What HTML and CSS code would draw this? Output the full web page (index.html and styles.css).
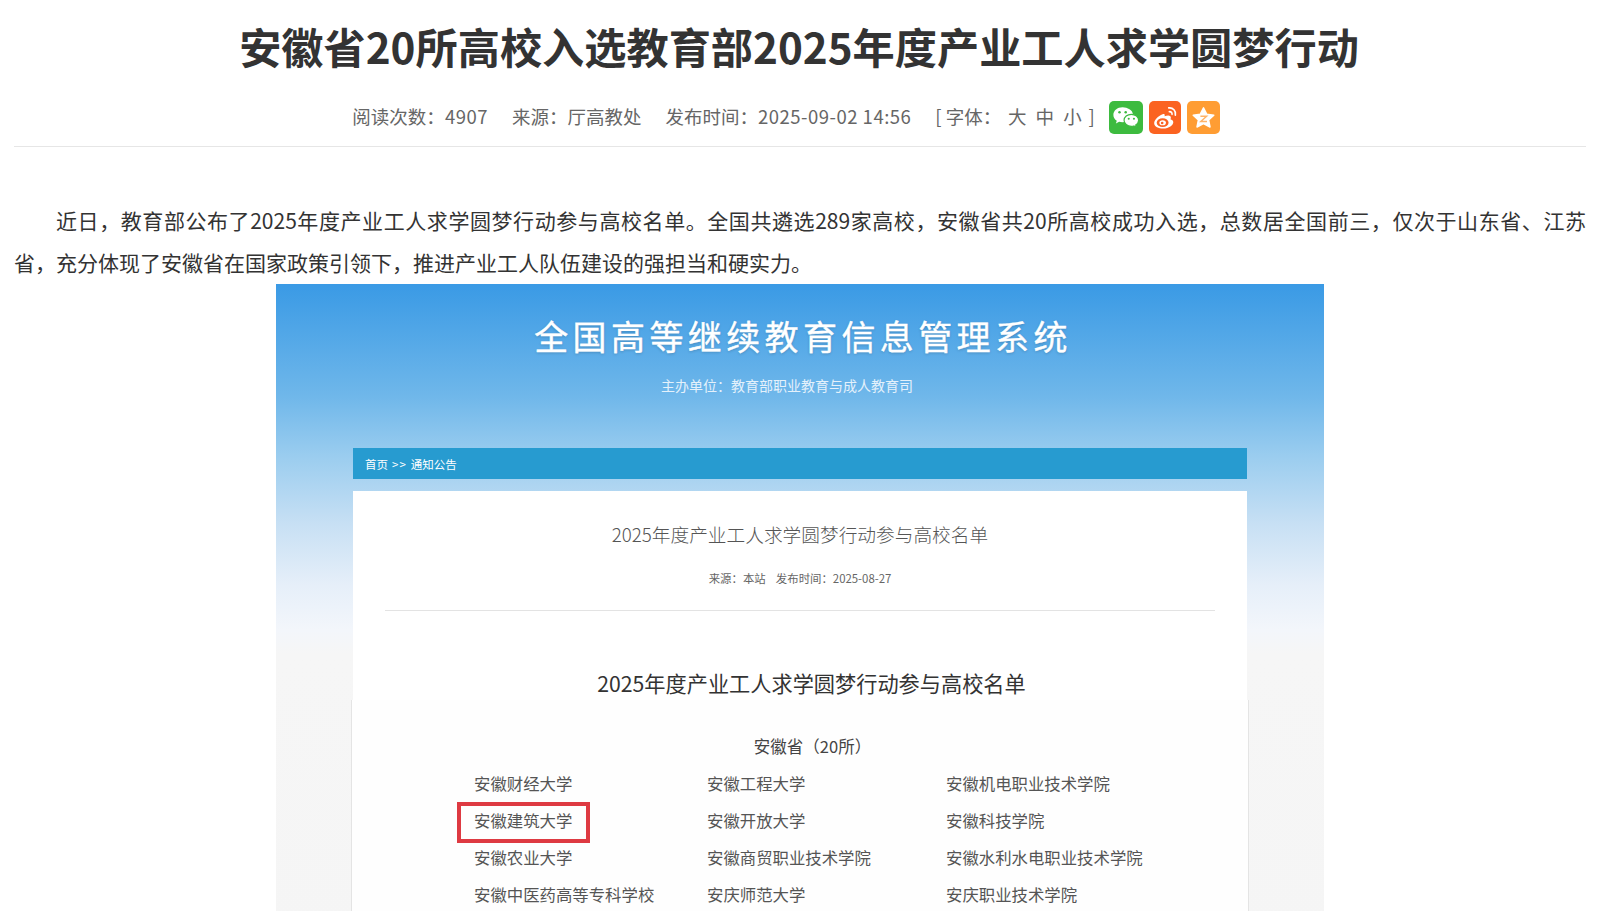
FILE: index.html
```html
<!DOCTYPE html>
<html lang="zh-CN">
<head>
    <meta charset="UTF-8">
    <title>安徽省20所高校入选教育部2025年度产业工人求学圆梦行动</title>
    <link rel="stylesheet" href="styles.css">
</head>
<body>
    <div class="article">
        <h1 class="art-title">安徽省20所高校入选教育部2025年度产业工人求学圆梦行动</h1>
        <div class="art-meta">
            <span>阅读次数：<i class="num">4907</i></span>
            <span>来源：厅高教处</span>
            <span>发布时间：<i class="num">2025-09-02 14:56</i></span>
            <span class="font-size">[ 字体： <a>大</a> <a>中</a> <a>小</a> ]</span>
            <div class="share">
                <a class="share-btn wechat">
                    <svg viewBox="0 0 34 34" width="34" height="33">
                        <path fill="#fff" d="M13.500 6.500C8 6.500 4 10 4 14.300c0 2.500 1.400 4.600 3.500 6l-.9 2.900 3.300-1.700c1.100.3 2.300.5 3.600.5 4.500 0 10.500-3.500 10.500-8.500C24 9.500 18.500 6.500 13.500 6.500z"/>
                        <path fill="#fff" stroke="#3dbb3f" stroke-width="1.200" d="M22.500 13.700c-4.200 0-7.500 2.800-7.500 6.200s3.300 6.200 7.500 6.200c.9 0 1.800-.1 2.600-.4l2.600 1.400-.7-2.400c1.800-1.100 3-2.900 3-4.800 0-3.400-3.300-6.200-7.500-6.200z"/>
                        <circle cx="10.300" cy="11.700" r="1.300" fill="#3dbb3f"/>
                        <circle cx="16.700" cy="11.700" r="1.300" fill="#3dbb3f"/>
                        <circle cx="19.800" cy="18.300" r="1.100" fill="#3dbb3f"/>
                        <circle cx="25.200" cy="18.300" r="1.100" fill="#3dbb3f"/>
                    </svg>
                </a>
                <a class="share-btn weibo">
                    <svg viewBox="0 0 34 34" width="32" height="33">
                        <path fill="#fff" d="M14.500 13.500c-5 2-9 6-9 9.500 0 3.700 4.800 5.700 9.600 5.700 6.200 0 10.700-3.700 10.700-6.700 0-1.900-1.600-2.800-3-3.200.5-1.200.7-2.400-.1-3.200-1.200-1.200-3.900-.9-6.200.2.500-1.700.300-3.400-2-2.300z"/>
                        <ellipse cx="14.500" cy="22.500" rx="6.300" ry="4.600" fill="#fb6321"/>
                        <ellipse cx="14.500" cy="22.500" rx="3.500" ry="2.700" fill="#fff"/>
                        <circle cx="14" cy="22.800" r="1.400" fill="#fb6321"/>
                        <path fill="none" stroke="#fff" stroke-width="1.800" stroke-linecap="round" d="M21 6.800c4.400-.6 8 3.200 7 7.600"/>
                        <path fill="none" stroke="#fff" stroke-width="1.600" stroke-linecap="round" d="M21.500 10.800c2-.3 3.300 1.300 3 3"/>
                    </svg>
                </a>
                <a class="share-btn qzone">
                    <svg viewBox="0 0 34 34" width="33" height="33">
                        <path fill="#fff" stroke="#fff" stroke-width="1.500" stroke-linejoin="round" d="M17 7l3.300 6.600 7.300 1-5.300 5 1.400 7.200-6.700-3.600-6.700 3.600 1.400-7.200-5.300-5 7.300-1z"/>
                        <path fill="none" stroke="#ffb469" stroke-width="1.500" d="M13.800 15.800h6.400l-6 5.400h6.400"/>
                    </svg>
                </a>
            </div>
        </div>
        <p class="art-text">近日，教育部公布了2025年度产业工人求学圆梦行动参与高校名单。全国共遴选289家高校，安徽省共20所高校成功入选，总数居全国前三，仅次于山东省、江苏省，充分体现了安徽省在国家政策引领下，推进产业工人队伍建设的强担当和硬实力。</p>

        <div class="shot">
            <div class="shot-head">
                <div class="shot-name">全国高等继续教育信息管理系统</div>
                <div class="shot-org">主办单位：教育部职业教育与成人教育司</div>
            </div>
            <div class="shot-crumb">首页<span class="crumb-sep">&gt;&gt;</span>通知公告</div>
            <div class="notice">
                <div class="notice-title">2025年度产业工人求学圆梦行动参与高校名单</div>
                <div class="notice-info">来源：本站&nbsp;&nbsp;&nbsp;&nbsp;发布时间：2025-08-27</div>
                <div class="notice-line"></div>
                <div class="notice-heading">2025年度产业工人求学圆梦行动参与高校名单</div>
            </div>
            <div class="school-card">
                <div class="province">安徽省（20所）</div>
                <div class="school-grid">
                    <div>安徽财经大学</div>
                    <div>安徽工程大学</div>
                    <div>安徽机电职业技术学院</div>
                    <div class="marked">安徽建筑大学</div>
                    <div>安徽开放大学</div>
                    <div>安徽科技学院</div>
                    <div>安徽农业大学</div>
                    <div>安徽商贸职业技术学院</div>
                    <div>安徽水利水电职业技术学院</div>
                    <div>安徽中医药高等专科学校</div>
                    <div>安庆师范大学</div>
                    <div>安庆职业技术学院</div>
                </div>
            </div>
        </div>
    </div>
</body>
</html>
```

FILE: styles.css
```css
html, body {
    height: 100%;
    overflow: hidden;
}
body {
    margin: 0;
    background: #fff;
    font-family: "Noto Sans CJK SC", sans-serif;
    color: #333;
}
.article {
    padding: 0 32px 0 14px;
}
.art-title {
    margin: 0;
    padding: 16px 2px 2px 0;
    font-size: 42.2px;
    line-height: 60px;
    font-weight: bold;
    text-align: center;
    color: #333;
}
.art-meta {
    display: flex;
    justify-content: center;
    align-items: center;
    gap: 24px;
    margin-top: 23px;
    padding: 0 28px 12px 0;
    border-bottom: 1px solid #e6e6e6;
    font-size: 18.5px;
    color: #666;
}
.art-meta > span {
    padding-bottom: 3px;
}
.num {
    font-style: normal;
    letter-spacing: 0.5px;
}
.font-size a {
    margin: 0 2.5px;
}
.share {
    display: flex;
    gap: 6px;
    margin-left: -10px;
}
.share-btn {
    display: block;
    height: 33px;
    border-radius: 5px;
}
.share-btn svg {
    display: block;
}
.wechat { background: #3dbb3f; }
.weibo { background: #fb6321; }
.qzone { background: #ff9d33; }

.art-text {
    margin: 0 0 1px;
    padding-top: 53px;
    font-size: 21px;
    line-height: 41.5px;
    text-indent: 2em;
    text-align: justify;
    color: #333;
}

.shot {
    width: 1048px;
    height: 660px;
    margin: 0 auto;
    padding: 0 77px;
    box-sizing: border-box;
    background: linear-gradient(#3a9ae5 0, #6fb7ea 112px, #9bcdef 173px, #c8e0f4 241px, #e6eff9 302px, #f3f6fb 346px, #f6f6f6 370px, #f5f5f5 100%);
}
.shot-head {
    height: 164px;
    padding-top: 32px;
    box-sizing: border-box;
    text-align: center;
    color: #fff;
}
.shot-name {
    padding-left: 6px;
    font-size: 34px;
    line-height: 40px;
    letter-spacing: 4.4px;
    -webkit-text-stroke: 0.4px #fff;
    text-shadow: 0 1px 3px rgba(0,0,0,0.2);
}
.shot-org {
    margin-top: 18px;
    padding-right: 26px;
    font-size: 14px;
    line-height: 22px;
    color: #e4f1fb;
}
.shot-crumb {
    height: 31px;
    padding-left: 12px;
    background: #279bd0;
    font-size: 11.5px;
    line-height: 32px;
    color: #fff;
}
.crumb-sep {
    margin: 0 4px;
    letter-spacing: 1px;
}
.notice {
    height: 209px;
    margin-top: 12px;
    padding-top: 31px;
    box-sizing: border-box;
    background: #fff;
    text-align: center;
}
.notice-title {
    font-size: 18.7px;
    line-height: 24px;
    font-weight: 300;
    color: #555;
}
.notice-info {
    margin-top: 23px;
    font-size: 11.4px;
    line-height: 18px;
    color: #666;
}
.notice-line {
    height: 1px;
    margin: 23px 32px 0;
    background: #e3e3e3;
}
.notice-heading {
    margin-top: 58px;
    padding-left: 23px;
    font-size: 21.2px;
    line-height: 28px;
    color: #333;
}
.school-card {
    height: 400px;
    margin: 0 -2px 0 -2px;
    padding-top: 35px;
    box-sizing: border-box;
    background: #fefefe;
    border-left: 1px solid #e4e4e4;
    border-right: 1px solid #e4e4e4;
}
.province {
    padding-left: 25px;
    font-size: 16.5px;
    line-height: 22px;
    text-align: center;
    color: #444;
}
.school-grid {
    display: grid;
    grid-template-columns: 233px 239px auto;
    grid-auto-rows: 37px;
    align-items: center;
    margin-top: 7px;
    padding-left: 122px;
    font-size: 16.4px;
    color: #555;
}
.marked {
    position: relative;
}
.marked::after {
    content: "";
    position: absolute;
    left: -17px;
    top: -6px;
    width: 133px;
    height: 41px;
    box-sizing: border-box;
    border: 4px solid #de3a42;
}
```
